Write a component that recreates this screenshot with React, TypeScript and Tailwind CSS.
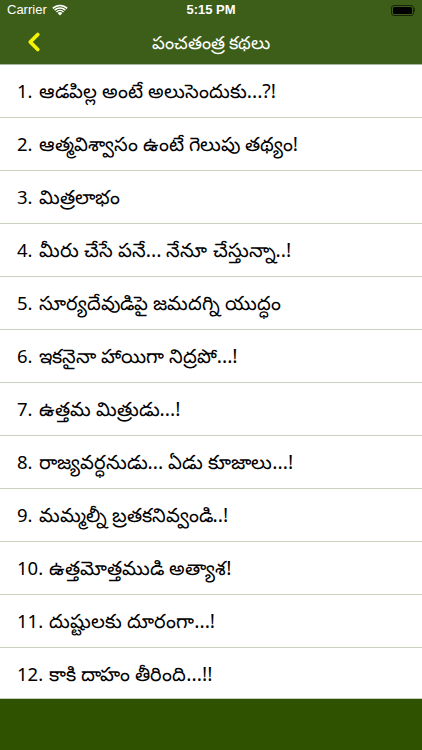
import { ChevronLeft } from 'lucide-react';

const stories: [string, string][] = [
  ['1.', 'ఆడపిల్ల అంటే అలుసెందుకు...?!'],
  ['2.', 'ఆత్మవిశ్వాసం ఉంటే గెలుపు తథ్యం!'],
  ['3.', 'మిత్రలాభం'],
  ['4.', 'మీరు చేసే పనే... నేనూ చేస్తున్నా..!'],
  ['5.', 'సూర్యదేవుడిపై జమదగ్ని యుద్ధం'],
  ['6.', 'ఇకనైనా హాయిగా నిద్రపో...!'],
  ['7.', 'ఉత్తమ మిత్రుడు...!'],
  ['8.', 'రాజ్యవర్ధనుడు... ఏడు కూజాలు...!'],
  ['9.', 'మమ్మల్నీ బ్రతకనివ్వండి..!'],
  ['10.', 'ఉత్తమోత్తముడి అత్యాశ!'],
  ['11.', 'దుష్టులకు దూరంగా...!'],
  ['12.', 'కాకి దాహం తీరింది...!!'],
];

function Wifi() {
  return (
    <svg width="16" height="12" viewBox="0 0 16 12" fill="white">
      <path d="M8 11.5 5.6 9.1a3.4 3.4 0 0 1 4.8 0z" />
      <path d="M3.9 7.4a5.8 5.8 0 0 1 8.2 0l-1.1 1.1a4.3 4.3 0 0 0-6 0z" />
      <path d="M2.1 5.6a8.4 8.4 0 0 1 11.8 0l-1.1 1.1a6.9 6.9 0 0 0-9.6 0z" />
      <path d="M0.3 3.8a11 11 0 0 1 15.4 0l-1.1 1.1a9.5 9.5 0 0 0-13.2 0z" />
    </svg>
  );
}

export default function App() {
  return (
    <div className="w-[422px] h-[750px] flex flex-col bg-white overflow-hidden" style={{ fontFamily: '"Noto Sans", "Liberation Sans", sans-serif' }}>
      {/* header */}
      <div className="bg-[#3d5e19] h-[64px] shrink-0 flex flex-col">
        <div className="h-[20px] flex items-center justify-between px-[7px] text-white text-[13px] relative" style={{ fontFamily: '"Liberation Sans", sans-serif' }}>
          <div className="flex items-center gap-[5px]">
            <span>Carrier</span>
            <Wifi />
          </div>
          <span className="absolute left-1/2 -translate-x-1/2 font-semibold">5:15 PM</span>
          <div className="flex items-center">
            <div className="w-[23px] h-[11px] rounded-[3px] border border-black/60 p-[1px]">
              <div className="w-full h-full bg-black rounded-[1.5px]" />
            </div>
            <div className="w-[1.5px] h-[4px] bg-black/50 rounded-r" />
          </div>
        </div>
        <div className="flex-1 flex items-center relative">
          <ChevronLeft className="text-[#f5f500] ml-[19px]" size={30} strokeWidth={3} />
          <span className="absolute left-1/2 -translate-x-1/2 text-white text-[18px]">పంచతంత్ర కథలు</span>
        </div>
      </div>
      <div className="h-[1px] bg-[#a9b59c] shrink-0" />
      {/* list */}
      <div className="flex-1 overflow-hidden">
        {stories.map(([n, s]) => (
          <div key={n} className="h-[53px] border-b border-[#c8d2bf] flex items-center gap-[6px] pl-[17px] text-black">
            <span className="text-[18.5px]">{n}</span>
            <span className="text-[19.5px]">{s}</span>
          </div>
        ))}
      </div>
      {/* bottom toolbar */}
      <div className="h-[52px] shrink-0 bg-[#2f5200] border-t border-[#c8d2bf]" />
    </div>
  );
}
